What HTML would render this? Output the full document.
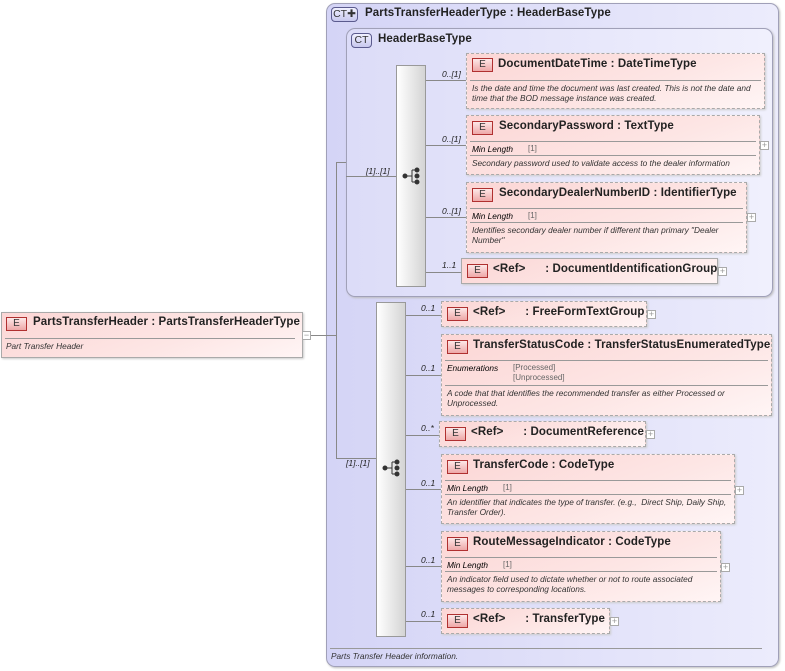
<!DOCTYPE html>
<html><head><meta charset="utf-8"><style>
body{margin:0;width:785px;height:671px;background:#fff;position:relative;overflow:hidden;font-family:"Liberation Sans",sans-serif;}
div,span{position:absolute;box-sizing:border-box;}
.ct{border:1px solid #a0a0b8;border-radius:9px;box-shadow:1px 1px 2px #bbb;}
.el{background:linear-gradient(160deg,#fcd6d5 0%,#fde6e5 60%,#fff5f5 100%);border:1px dashed #aaa;box-shadow:1px 1px 2px #ccc;}
.sol{border-style:solid;}
.E{width:21px;height:14px;border:1px solid #b03030;background:linear-gradient(#fde8e8,#eea8a8);font-size:10px;text-align:center;line-height:12px;color:#333;}
.t{font-size:11.5px;font-weight:bold;color:#222;white-space:nowrap;letter-spacing:0.1px;}
.d{font-size:8.3px;font-style:italic;color:#333;line-height:10px;}
.hl{height:1px;background:#999;}
.card{font-size:8.5px;font-style:italic;color:#222;}
.ln{background:#888;}
.pl{width:9px;height:9px;border:1px solid #aaa;background:#fff;font-size:9px;line-height:6px;text-align:center;color:#999;}
.seq{background:linear-gradient(90deg,#fff,#d4d4d4);border:1px solid #999;}
.badge{border:1px solid #5b5b8e;border-radius:4px;background:linear-gradient(#f0f0ff,#c8c8ee);font-size:10.5px;color:#333;text-align:center;line-height:12px;height:15px;}
.ml{font-size:8.3px;font-style:italic;color:#000;}
.mv{font-size:8px;color:#666;}
</style></head><body>

<div class="ct" style="left:326px;top:3px;width:453px;height:664px;background:linear-gradient(90deg,#d4d4f6,#ececfc);"></div>
<div class="badge" style="left:331px;top:7px;width:27px;">CT✚</div>
<div class="t" style="left:365px;top:7px;">PartsTransferHeaderType : HeaderBaseType</div>

<div class="ct" style="left:346px;top:28px;width:427px;height:269px;background:linear-gradient(90deg,#dcdcf8,#f0f0fd);"></div>
<div class="badge" style="left:351px;top:33px;width:21px;">CT</div>
<div class="t" style="left:378px;top:33px;">HeaderBaseType</div>

<div class="ln" style="left:336px;top:162px;width:1px;height:297px;"></div>
<div class="ln" style="left:336px;top:162px;width:10px;height:1px;"></div>
<div class="ln" style="left:346px;top:176px;width:50px;height:1px;"></div>
<div class="ln" style="left:336px;top:458px;width:40px;height:1px;"></div>
<div class="ln" style="left:310px;top:335px;width:26px;height:1px;"></div>
<div class="card" style="left:366px;top:166px;">[1]..[1]</div>
<div class="card" style="left:346px;top:458px;">[1]..[1]</div>

<div class="seq" style="left:396px;top:65px;width:30px;height:222px;"></div>
<svg style="position:absolute;left:402px;top:167px" width="20" height="18"><g fill="#333" stroke="#333"><circle cx="3" cy="9" r="2"/><circle cx="15" cy="3" r="2"/><circle cx="15" cy="9" r="2"/><circle cx="15" cy="15" r="2"/><path d="M3 9H10M10 3V15M10 3H15M10 15H15" fill="none"/></g></svg>
<div class="ln" style="left:426px;top:80px;width:40px;height:1px;"></div>
<div class="ln" style="left:426px;top:145px;width:40px;height:1px;"></div>
<div class="ln" style="left:426px;top:217px;width:40px;height:1px;"></div>
<div class="ln" style="left:426px;top:272px;width:35px;height:1px;"></div>
<div class="card" style="left:442px;top:69px;">0..[1]</div>
<div class="card" style="left:442px;top:134px;">0..[1]</div>
<div class="card" style="left:442px;top:206px;">0..[1]</div>
<div class="card" style="left:442px;top:260px;">1..1</div>

<div class="el" style="left:466px;top:53px;width:299px;height:56px;"></div>
<div class="E" style="left:472px;top:58px;">E</div>
<div class="t" style="left:498px;top:58px;">DocumentDateTime : DateTimeType</div>
<div class="hl" style="left:470px;top:80px;width:291px;"></div>
<div class="d" style="left:472px;top:83px;width:292px;">Is the date and time the document was last created. This is not the date and time that the BOD message instance was created.</div>

<div class="el" style="left:466px;top:115px;width:294px;height:60px;"></div>
<div class="E" style="left:472px;top:121px;">E</div>
<div class="t" style="left:499px;top:120px;">SecondaryPassword : TextType</div>
<div class="hl" style="left:470px;top:141px;width:286px;"></div>
<div class="ml" style="left:472px;top:144px;">Min Length</div><div class="mv" style="left:528px;top:144px;">[1]</div>
<div class="hl" style="left:470px;top:155px;width:286px;"></div>
<div class="d" style="left:472px;top:158px;">Secondary password used to validate access to the dealer information</div>
<div class="pl" style="left:760px;top:141px;">+</div>

<div class="el" style="left:466px;top:182px;width:281px;height:71px;"></div>
<div class="E" style="left:472px;top:188px;">E</div>
<div class="t" style="left:499px;top:187px;">SecondaryDealerNumberID : IdentifierType</div>
<div class="hl" style="left:470px;top:208px;width:273px;"></div>
<div class="ml" style="left:472px;top:211px;">Min Length</div><div class="mv" style="left:528px;top:211px;">[1]</div>
<div class="hl" style="left:470px;top:222px;width:273px;"></div>
<div class="d" style="left:472px;top:225px;width:272px;">Identifies secondary dealer number if different than primary "Dealer Number"</div>
<div class="pl" style="left:747px;top:213px;">+</div>

<div class="el sol" style="left:461px;top:258px;width:257px;height:26px;"></div>
<div class="E" style="left:467px;top:264px;">E</div>
<div class="t" style="left:493px;top:263px;">&lt;Ref&gt;&nbsp;&nbsp;&nbsp;&nbsp;&nbsp; : DocumentIdentificationGroup</div>
<div class="pl" style="left:718px;top:267px;">+</div>

<div class="el sol" style="left:1px;top:312px;width:302px;height:46px;border-color:#aaa;"></div>
<div class="E" style="left:6px;top:317px;">E</div>
<div class="t" style="left:33px;top:316px;">PartsTransferHeader : PartsTransferHeaderType</div>
<div class="hl" style="left:5px;top:338px;width:290px;"></div>
<div class="d" style="left:6px;top:341px;">Part Transfer Header</div>
<div class="pl" style="left:302px;top:331px;">−</div>

<div class="seq" style="left:376px;top:302px;width:30px;height:335px;"></div>
<svg style="position:absolute;left:382px;top:459px" width="20" height="18"><g fill="#333" stroke="#333"><circle cx="3" cy="9" r="2"/><circle cx="15" cy="3" r="2"/><circle cx="15" cy="9" r="2"/><circle cx="15" cy="15" r="2"/><path d="M3 9H10M10 3V15M10 3H15M10 15H15" fill="none"/></g></svg>
<div class="ln" style="left:406px;top:315px;width:35px;height:1px;"></div>
<div class="ln" style="left:406px;top:375px;width:35px;height:1px;"></div>
<div class="ln" style="left:406px;top:435px;width:33px;height:1px;"></div>
<div class="ln" style="left:406px;top:489px;width:35px;height:1px;"></div>
<div class="ln" style="left:406px;top:566px;width:35px;height:1px;"></div>
<div class="ln" style="left:406px;top:621px;width:35px;height:1px;"></div>
<div class="card" style="left:421px;top:303px;">0..1</div>
<div class="card" style="left:421px;top:363px;">0..1</div>
<div class="card" style="left:421px;top:423px;">0..*</div>
<div class="card" style="left:421px;top:478px;">0..1</div>
<div class="card" style="left:421px;top:555px;">0..1</div>
<div class="card" style="left:421px;top:609px;">0..1</div>

<div class="el" style="left:441px;top:301px;width:206px;height:26px;"></div>
<div class="E" style="left:447px;top:307px;">E</div>
<div class="t" style="left:473px;top:306px;">&lt;Ref&gt;&nbsp;&nbsp;&nbsp;&nbsp;&nbsp; : FreeFormTextGroup</div>
<div class="pl" style="left:647px;top:310px;">+</div>

<div class="el" style="left:441px;top:334px;width:331px;height:82px;"></div>
<div class="E" style="left:447px;top:340px;">E</div>
<div class="t" style="left:473px;top:339px;">TransferStatusCode : TransferStatusEnumeratedType</div>
<div class="hl" style="left:445px;top:360px;width:323px;"></div>
<div class="ml" style="left:447px;top:363px;">Enumerations</div>
<div class="mv" style="left:513px;top:363px;line-height:10px;">[Processed]<br>[Unprocessed]</div>
<div class="hl" style="left:445px;top:385px;width:323px;"></div>
<div class="d" style="left:447px;top:388px;width:320px;">A code that that identifies the recommended transfer as either Processed or Unprocessed.</div>

<div class="el" style="left:439px;top:421px;width:207px;height:26px;"></div>
<div class="E" style="left:445px;top:427px;">E</div>
<div class="t" style="left:471px;top:426px;">&lt;Ref&gt;&nbsp;&nbsp;&nbsp;&nbsp;&nbsp; : DocumentReference</div>
<div class="pl" style="left:646px;top:430px;">+</div>

<div class="el" style="left:441px;top:454px;width:294px;height:70px;"></div>
<div class="E" style="left:447px;top:460px;">E</div>
<div class="t" style="left:473px;top:459px;">TransferCode : CodeType</div>
<div class="hl" style="left:445px;top:480px;width:286px;"></div>
<div class="ml" style="left:447px;top:483px;">Min Length</div><div class="mv" style="left:503px;top:483px;">[1]</div>
<div class="hl" style="left:445px;top:494px;width:286px;"></div>
<div class="d" style="left:447px;top:497px;width:287px;">An identifier that indicates the type of transfer. (e.g.,&nbsp; Direct Ship, Daily Ship, Transfer Order).</div>
<div class="pl" style="left:735px;top:486px;">+</div>

<div class="el" style="left:441px;top:531px;width:280px;height:71px;"></div>
<div class="E" style="left:447px;top:537px;">E</div>
<div class="t" style="left:473px;top:536px;">RouteMessageIndicator : CodeType</div>
<div class="hl" style="left:445px;top:557px;width:272px;"></div>
<div class="ml" style="left:447px;top:560px;">Min Length</div><div class="mv" style="left:503px;top:560px;">[1]</div>
<div class="hl" style="left:445px;top:571px;width:272px;"></div>
<div class="d" style="left:447px;top:574px;width:272px;">An indicator field used to dictate whether or not to route associated messages to corresponding locations.</div>
<div class="pl" style="left:721px;top:563px;">+</div>

<div class="el" style="left:441px;top:608px;width:169px;height:26px;"></div>
<div class="E" style="left:447px;top:614px;">E</div>
<div class="t" style="left:473px;top:613px;">&lt;Ref&gt;&nbsp;&nbsp;&nbsp;&nbsp;&nbsp; : TransferType</div>
<div class="pl" style="left:610px;top:617px;">+</div>

<div class="hl" style="left:330px;top:648px;width:432px;"></div>
<div class="d" style="left:331px;top:651px;">Parts Transfer Header information.</div>
</body></html>
